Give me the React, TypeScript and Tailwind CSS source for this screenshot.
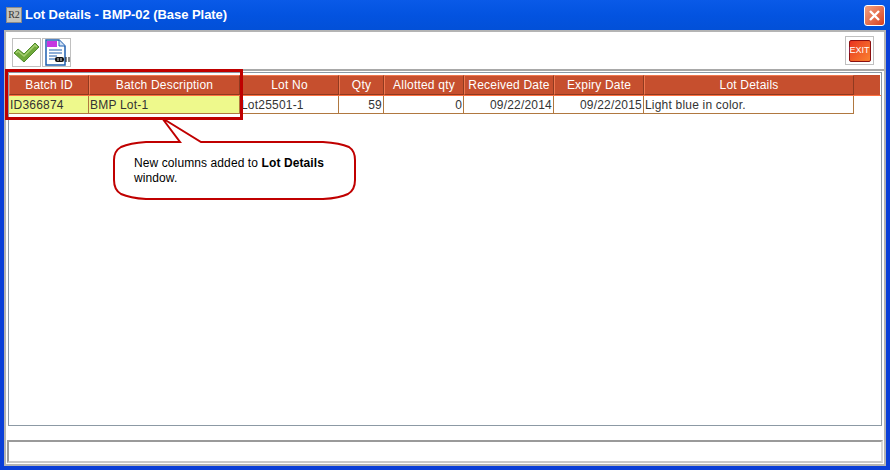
const columns = [
  { label: "Batch ID", width: "w-[80px]" },
  { label: "Batch Description", width: "w-[151px]" },
  { label: "Lot No", width: "w-[99px]" },
  { label: "Qty", width: "w-[45px]" },
  { label: "Allotted qty", width: "w-[80px]" },
  { label: "Received Date", width: "w-[90px]" },
  { label: "Expiry Date", width: "w-[90px]" },
  { label: "Lot Details", width: "w-[210px]" },
];

const cells = [
  { text: "ID366874", width: "w-[80px]", tint: true },
  { text: "BMP Lot-1", width: "w-[151px]", tint: true },
  { text: "Lot25501-1", width: "w-[99px]" },
  { text: "59", width: "w-[45px]", right: true },
  { text: "0", width: "w-[80px]", right: true },
  { text: "09/22/2014", width: "w-[90px]", right: true },
  { text: "09/22/2015", width: "w-[90px]", right: true },
  { text: "Light blue in color.", width: "w-[210px]" },
];

function AppIcon() {
  return (
    <div className="flex h-[16px] w-[16px] items-center justify-center border border-[#8a8a8a] bg-[#c4c4bc] font-['Liberation_Serif',serif] text-[10px] leading-none text-[#333]">
      R2
    </div>
  );
}

function CheckIcon() {
  return (
    <svg width="27" height="23" viewBox="0 0 27 23">
      <path d="M1 12 L5 8 L11 13 L22 2 L26 6 L11 21 Z" fill="#6fa83a" stroke="#4e8a2a" strokeWidth="1" strokeLinejoin="round" />
      <path d="M3 12 L5 10 L11 15 L22 4 L24 6" fill="none" stroke="#a6cf72" strokeWidth="1.5" />
    </svg>
  );
}

function DocIcon() {
  return (
    <svg width="26" height="28" viewBox="0 0 26 28">
      <path d="M2 1 H15 L21 7 V26 H2 Z" fill="#fff" stroke="#1f5fb0" strokeWidth="1.5" />
      <rect x="3" y="2" width="10" height="6" fill="#c637e0" />
      <path d="M15 1 V7 H21" fill="#cfe0f5" stroke="#1f5fb0" strokeWidth="1" />
      <path d="M5 11 H18 M5 14 H18 M5 17 H13 M5 20 H12" stroke="#1f5fb0" strokeWidth="1.2" />
      <rect x="11" y="18" width="9" height="5" rx="2" fill="#111" />
      <path d="M14 19 V22 M17 19 V22" stroke="#ddd" strokeWidth="1" />
      <path d="M22 18 V23 M25 18 V23" stroke="#111" strokeWidth="1" />
    </svg>
  );
}

function Callout() {
  return (
    <svg className="absolute left-[100px] top-[110px]" width="270" height="100" viewBox="0 0 270 100">
      <path
        d="M62 8 L101 32 L223 32 Q240 33 249 37 Q255 41 255 50 L255 70 Q255 80 248 84 Q240 88 223 89 L46 89 Q30 88 21 84 Q14 80 14 70 L14 50 Q14 41 21 37 Q30 33 46 32 L80 32 Z"
        fill="#fff"
        stroke="#c00000"
        strokeWidth="2"
      />
    </svg>
  );
}

export default function App() {
  return (
    <div className="relative flex h-[470px] w-[890px] flex-col overflow-hidden bg-[#0a3fd8] font-['Liberation_Sans',sans-serif] text-[12px] text-[#333]">
      <div className="flex h-[30px] shrink-0 items-center bg-gradient-to-b from-[#0a5ae8] via-[#0353e0] to-[#0250d8] pl-[6px] pr-[5px]">
        <AppIcon />
        <span className="ml-[3px] flex-1 text-[13px] font-bold tracking-[-0.05px] text-white">
          Lot Details - BMP-02 (Base Plate)
        </span>
        <div className="flex h-[21px] w-[21px] items-center justify-center rounded-[3px] border border-white bg-gradient-to-br from-[#f0a080] to-[#d83c18]">
          <svg width="13" height="13" viewBox="0 0 13 13">
            <path d="M2 2 L11 11 M11 2 L2 11" stroke="#fff" strokeWidth="2.4" />
          </svg>
        </div>
      </div>

      <div className="mx-[4px] mb-[4px] flex flex-1 flex-col border-2 border-[#b4b4b4] bg-white">
        <div className="flex h-[39px] shrink-0 items-start border-b-2 border-b-[#a8a8a8] px-[6px]">
          <div className="mt-[6px] flex h-[29px] w-[29px] items-center justify-center border border-[#c0c0c0]">
            <CheckIcon />
          </div>
          <div className="ml-[1px] mt-[6px] flex h-[29px] w-[29px] items-center justify-center border border-[#c0c0c0]">
            <DocIcon />
          </div>
          <div className="ml-auto mr-[4px] mt-[4px] flex h-[29px] w-[29px] items-center justify-center border border-[#c0c0c0]">
            <div className="flex h-[22px] w-[22px] items-center justify-center rounded-[2px] border border-[#8b1010] bg-gradient-to-br from-[#e83020] to-[#f98030] text-[9px] leading-none text-white">
              EXIT
            </div>
          </div>
        </div>

        <div className="mx-[2px] mt-[1px] h-[354px] shrink-0 border border-[#8c99a4] pt-[2px]">
          <div className="mr-[1px] flex h-[20px] bg-[#c64f2e]">
            {columns.map((c) => (
              <div
                key={c.label}
                className={`${c.width} flex shrink-0 items-center justify-center border border-[#8f3a20] border-t-[#f07850] border-l-[#f07850] tracking-[0.2px] text-white`}
              >
                {c.label}
              </div>
            ))}
          </div>
          <div className="flex h-[19px] border-t border-t-[#ff7040]">
            {cells.map((c) => (
              <div
                key={c.text}
                className={`${c.width} ${c.tint ? "bg-[#eef98c]" : "bg-white"} ${c.right ? "justify-end" : ""} flex shrink-0 items-center overflow-hidden whitespace-nowrap border-r border-b border-[#b07840] px-[1px] tracking-[0.2px]`}
              >
                {c.text}
              </div>
            ))}
          </div>
        </div>

        <div className="mx-[1px] mt-[14px] h-[23px] shrink-0 border-2 border-[#9a9a9a] border-r-[#d8d8d8] border-b-[#c8c8c8] bg-white" />
      </div>

      <div className="absolute left-[5px] top-[69px] h-[51px] w-[238px] border-[3px] border-[#bf0000]" />
      <Callout />
      <div className="absolute left-[134px] top-[156px] w-[210px] text-[12px] leading-[15px] tracking-[0.1px] text-black">
        New columns added to <b>Lot Details</b> window.
      </div>
    </div>
  );
}
